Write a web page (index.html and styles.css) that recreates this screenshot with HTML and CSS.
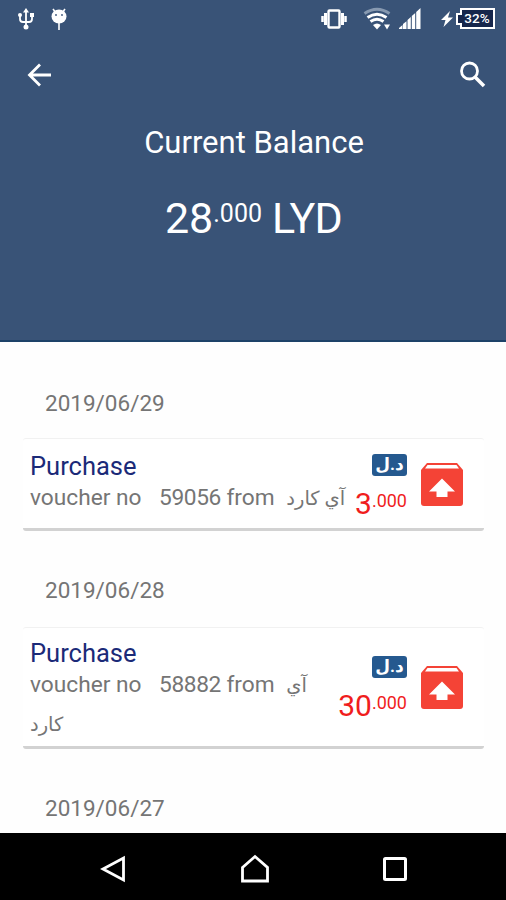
FILE: index.html
```html
<!DOCTYPE html>
<html lang="en">
<head>
    <meta charset="UTF-8">
    <meta name="viewport" content="width=device-width, initial-scale=1.0">
    <title>Current Balance</title>
    <link rel="stylesheet" href="styles.css">
</head>
<body>
    <header class="header">
        <div class="status-bar">
            <svg class="usb" width="18" height="24" viewBox="0 0 18 24" fill="none" stroke="#fff" stroke-width="1.8">
                <path d="M9 4v16M3 8v4q0 3 3 3h6q3 0 3-3V8"/>
                <path d="M9 1l3 4.500H6z" fill="#fff" stroke="none"/>
                <circle cx="3" cy="8" r="2" fill="#fff" stroke="none"/>
                <rect x="13" y="6" width="4" height="4" fill="#fff" stroke="none"/>
                <circle cx="9" cy="20" r="2.500" fill="#fff" stroke="none"/>
            </svg>
            <svg class="debug" width="18" height="24" viewBox="0 0 18 24">
                <path d="M3 2l3 4M15 2l-3 4M9 15v8" stroke="#fff" stroke-width="1.600"/>
                <ellipse cx="9" cy="9.500" rx="7.500" ry="7" fill="#fff"/>
                <circle cx="6" cy="8" r=".9" fill="#395377"/>
                <circle cx="12" cy="8" r=".9" fill="#395377"/>
            </svg>
            <svg class="vibrate" width="28" height="24" viewBox="0 0 28 24" fill="none" stroke="#fff">
                <rect x="8.500" y="3.500" width="11" height="17" rx="1" stroke-width="2.400"/>
                <path d="M5.500 6v12M22.500 6v12" stroke-width="3"/>
                <path d="M2.500 9v6M25.500 9v6" stroke-width="2.500"/>
            </svg>
            <svg class="wifi" width="28" height="24" viewBox="0 0 28 24" fill="none" stroke="#fff" stroke-width="3">
                <path d="M1.500 6.500Q14-2 26.500 6.500" stroke="#8799b0"/>
                <path d="M4.500 10.500Q14 4 23.500 10.500M7.500 14.500Q14 10 20.500 14.500"/>
                <path d="M10 18q4-3 8 0l-4 4.500z" fill="#fff" stroke="none"/>
                <path d="M21 17.500h6l-3 5z" fill="#fff" stroke="none"/>
            </svg>
            <svg class="signal" width="24" height="24" viewBox="0 0 24 24" fill="#fff">
                <path d="M1 22v-1l3.500-3v4zM5 22v-5l3.500-2.800V22zM9.500 22v-9l3.300-3v12zM13.800 22V9l3.400-3v16zM18.200 22V5L22.500 1v21z"/>
            </svg>
            <svg class="bolt" width="12" height="18" viewBox="0 0 12 18" fill="#fff">
                <path d="M9 1L0 10h4.500L2.500 17 12 7.500H7z"/>
            </svg>
            <svg class="battery" width="39" height="21" viewBox="0 0 39 21">
                <path d="M5 1h33v19H5v-4H1V6h4z" fill="#16264b" stroke="#fff" stroke-width="2"/>
                <text x="21" y="15.300" text-anchor="middle" fill="#fff">32%</text>
            </svg>
        </div>
        <div class="toolbar">
            <svg width="26" height="26" viewBox="0 0 26 26" fill="none" stroke="#fff" stroke-width="2.800">
                <path d="M25 13H4M14 2.500L3.500 13 14 23.500"/>
            </svg>
            <svg width="28" height="28" viewBox="0 0 28 28" fill="none" stroke="#fff" stroke-width="2.800">
                <circle cx="10.500" cy="10" r="8"/>
                <path d="M16 16l9 9" stroke-width="3.600"/>
            </svg>
        </div>
        <h1 class="title">Current Balance</h1>
        <div class="balance"><span>28</span><span class="decimals">.000</span><span class="currency">LYD</span></div>
    </header>

    <main class="list">
        <div class="date">2019/06/29</div>
        <div class="card">
            <div class="info">
                <h2>Purchase</h2>
                <p>voucher no <span class="number">59056</span> from <span class="vendor">آي كارد</span></p>
            </div>
            <div class="amount">
                <span class="badge">د.ل</span>
                <div class="price"><span>3</span><span class="decimals">.000</span></div>
            </div>
            <svg class="out-icon" width="42" height="43" viewBox="0 0 42 43">
                <path d="M6 0h30l6 7v33q0 3-3 3H3q-3 0-3-3V7z" fill="#f44336"/>
                <path d="M6.500 2h29l2.500 3.500H4z" fill="#fff"/>
                <path d="M21 15.500L34 28.500h-7.500V34h-11v-5.500H8z" fill="#fff"/>
            </svg>
        </div>

        <div class="date">2019/06/28</div>
        <div class="card card-tall">
            <div class="info">
                <h2>Purchase</h2>
                <p>voucher no <span class="number">58882</span> from <span class="vendor">آي</span></p>
                <p class="vendor-line">كارد</p>
            </div>
            <div class="amount">
                <span class="badge">د.ل</span>
                <div class="price"><span>30</span><span class="decimals">.000</span></div>
            </div>
            <svg class="out-icon" width="42" height="43" viewBox="0 0 42 43">
                <path d="M6 0h30l6 7v33q0 3-3 3H3q-3 0-3-3V7z" fill="#f44336"/>
                <path d="M6.500 2h29l2.500 3.500H4z" fill="#fff"/>
                <path d="M21 15.500L34 28.500h-7.500V34h-11v-5.500H8z" fill="#fff"/>
            </svg>
        </div>

        <div class="date">2019/06/27</div>
    </main>

    <nav class="nav-bar">
        <svg width="28" height="30" viewBox="0 0 28 30" fill="none" stroke="#fff" stroke-width="2.800">
            <path d="M24.500 4v22L4 15z"/>
        </svg>
        <svg width="30" height="30" viewBox="0 0 30 30" fill="none" stroke="#fff" stroke-width="2.800">
            <path d="M2.500 13.500L15 2.500l12.500 11v13.500h-25z"/>
        </svg>
        <svg width="26" height="26" viewBox="0 0 26 26" fill="none" stroke="#fff" stroke-width="3">
            <rect x="2.500" y="2.500" width="21" height="21" rx="1"/>
        </svg>
    </nav>
</body>
</html>
```
FILE: styles.css
```css
* {
    box-sizing: border-box;
}
body {
    font-family: Roboto, "DejaVu Sans", sans-serif;
    margin: 0;
    height: 900px;
    display: flex;
    flex-direction: column;
    background: #fefefe;
    overflow: hidden;
}
h1, h2, p {
    margin: 0;
    font-weight: 400;
}
.header {
    height: 342px;
    flex-shrink: 0;
    background: #395377;
    border-bottom: 2px solid #1d4268;
    color: #fff;
}
.status-bar {
    display: flex;
    align-items: center;
    height: 37px;
    padding: 0 11px 0 17px;
}
.debug {
    margin-left: 15px;
}
.vibrate {
    margin-left: auto;
}
.wifi {
    margin-left: 15px;
}
.signal {
    margin-left: 7px;
}
.bolt {
    margin-left: 19px;
}
.battery {
    margin-left: 3px;
    font-size: 13.5px;
    font-weight: 500;
}
.toolbar {
    display: flex;
    align-items: center;
    justify-content: space-between;
    height: 76px;
    padding: 0 19px 0 26px;
}
.title {
    margin-top: 10px;
    padding-left: 2px;
    font-size: 31px;
    line-height: 40px;
    text-align: center;
}
.balance {
    display: flex;
    justify-content: center;
    margin-top: 29px;
    padding-left: 1px;
    font-size: 43px;
    line-height: 52px;
}
.balance .decimals {
    font-size: 25px;
    line-height: 44px;
}
.currency {
    margin-left: 10px;
    letter-spacing: -0.7px;
}
.list {
    flex: 1;
    padding: 0 22px 0 23px;
    color: #757575;
    overflow: hidden;
}
.date {
    height: 96px;
    padding: 46px 0 0 22px;
    font-size: 22.5px;
    line-height: 30px;
}
.card {
    display: flex;
    height: 93px;
    padding: 0 21px 0 7px;
    background: #fff;
    border-top: 1px solid #f1f1f1;
    border-bottom: 3px solid #d2d2d2;
    border-radius: 3px;
}
.card-tall {
    height: 122px;
}
.card + .date {
    padding-top: 44px;
}
.info {
    flex: 1;
    padding-top: 10px;
    white-space: nowrap;
}
.info h2 {
    font-size: 25.5px;
    line-height: 34px;
    color: #1b2a78;
}
.info p {
    font-size: 22.7px;
    line-height: 30px;
}
.number {
    margin-left: 12px;
    letter-spacing: -0.4px;
}
.vendor {
    margin-left: 6px;
    font-size: 19.5px;
}
.info .vendor-line {
    margin-top: 9px;
    font-size: 19.5px;
}
.amount {
    display: flex;
    flex-direction: column;
    align-items: flex-end;
    padding-top: 15px;
}
.badge {
    width: 35px;
    height: 22px;
    border-radius: 3px;
    background: #25598f;
    color: #fff;
    font-size: 17px;
    font-weight: 700;
    line-height: 20px;
    text-align: center;
}
.price {
    display: flex;
    margin-top: 10px;
    font-size: 30px;
    line-height: 36px;
    color: #f01d1d;
}
.price .decimals {
    font-size: 18px;
    line-height: 29px;
}
.out-icon {
    margin: 24px 0 0 14px;
}
.card-tall .info {
    padding-top: 8px;
}
.card-tall .amount {
    padding-top: 28px;
}
.card-tall .out-icon {
    margin-top: 38px;
}
.nav-bar {
    display: flex;
    align-items: center;
    justify-content: space-between;
    height: 67px;
    flex-shrink: 0;
    padding: 4px 98px 0 99px;
    background: #000;
}
```
